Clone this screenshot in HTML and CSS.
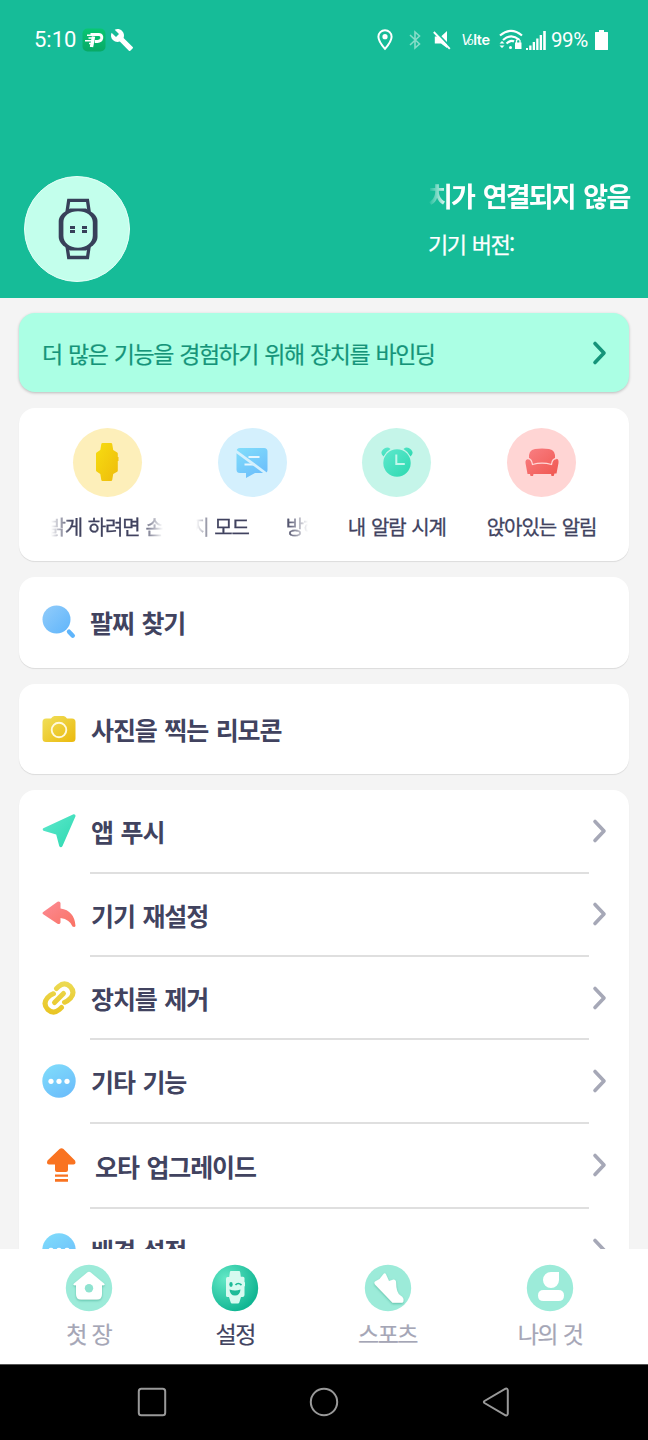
FILE: index.html
```html
<!DOCTYPE html>
<html lang="ko">
<head>
<meta charset="utf-8">
<title>설정</title>
<link rel="stylesheet" href="styles.css">
</head>
<body>
<svg class="defs" width="0" height="0" aria-hidden="true">
  <defs>
    <linearGradient id="yellow" x1="0" y1="0" x2="1" y2="1"><stop offset="0" stop-color="#f0e05c"/><stop offset="1" stop-color="#ebb90c"/></linearGradient>
    <linearGradient id="chain" x1="0" y1="0" x2="0" y2="34" gradientUnits="userSpaceOnUse"><stop offset="0" stop-color="#ecdb55"/><stop offset="1" stop-color="#e9c422"/></linearGradient>
    <linearGradient id="gold" x1="0" y1="0" x2="1" y2="1"><stop offset="0" stop-color="#f7dd12"/><stop offset="1" stop-color="#eebb0b"/></linearGradient>
    <linearGradient id="blue" x1="0" y1="0" x2="1" y2="1"><stop offset="0" stop-color="#92ccfa"/><stop offset="1" stop-color="#5fb5fb"/></linearGradient>
    <linearGradient id="sky" x1="0.2" y1="0" x2="0.8" y2="1"><stop offset="0" stop-color="#7fdbfb"/><stop offset="1" stop-color="#6bbcfb"/></linearGradient>
    <linearGradient id="green" x1="0" y1="0" x2="1" y2="1"><stop offset="0" stop-color="#5fe8cd"/><stop offset="1" stop-color="#2cd9b0"/></linearGradient>
    <linearGradient id="red" x1="0" y1="0" x2="1" y2="1"><stop offset="0" stop-color="#f98084"/><stop offset="1" stop-color="#f0564f"/></linearGradient>
    <linearGradient id="coral" x1="0" y1="0" x2="1" y2="1"><stop offset="0" stop-color="#fc8b95"/><stop offset="1" stop-color="#fa7263"/></linearGradient>
    <linearGradient id="app" x1="0" y1="0" x2="0" y2="1"><stop offset="0" stop-color="#08c673"/><stop offset="1" stop-color="#08a966"/></linearGradient>
    <radialGradient id="active" cx=".3" cy=".3" r=".75"><stop offset="0" stop-color="#63e8c6"/><stop offset="1" stop-color="#10b592"/></radialGradient>
    <filter id="soft" x="-30%" y="-30%" width="160%" height="160%"><feDropShadow dx="0" dy="1.2" stdDeviation="1" flood-color="#3cab91" flood-opacity=".65"/></filter>
  </defs>
</svg>
<div class="phone">
  <header class="top">
    <div class="status">
      <span class="clock">5:10</span>
      <svg class="app-icon" width="24" height="24" viewBox="0 0 24 24"><rect x=".5" y=".5" width="23" height="23" rx="5" fill="url(#app)"/><path d="M8.500 6.500H17q3.300.2 2.700 3.800-.7 3.200-4.200 3.200h-2.700" fill="none" stroke="#fff" stroke-width="3"/><path d="M11.500 8.500L9.500 19" stroke="#fff" stroke-width="3.400"/><path d="M5 7.300h5M6.500 10h4M3 12.700h7M7 15.400h3M8 18h3" stroke="#fff" stroke-width="1.500"/></svg>
      <svg class="wrench" width="24" height="24" viewBox="0 0 24 24"><path d="M22.700 19l-9.100-9.100c.9-2.300.4-5-1.500-6.900-2-2-5-2.400-7.400-1.300L9 6 6 9 1.600 4.700C.4 7.100.9 10.100 2.900 12.100c1.900 1.900 4.600 2.400 6.900 1.500l9.100 9.100c.4.4 1 .4 1.400 0l2.300-2.300c.5-.4.5-1.100.1-1.400z" fill="#fff"/></svg>
      <div class="status-right">
        <svg class="pin" width="16" height="22" viewBox="0 0 16 22"><path d="M8 1.300C4.300 1.300 1.400 4.100 1.400 7.700 1.400 12.300 8 19.800 8 19.800s6.600-7.500 6.600-12.100C14.600 4.100 11.700 1.300 8 1.300z" fill="none" stroke="#fff" stroke-width="2"/><circle cx="8" cy="7.700" r="2.600" fill="#fff"/></svg>
        <svg class="bt" width="12" height="20" viewBox="0 0 12 20"><path d="M1 5l9.500 9L6 18V2l4.500 4L1 15" fill="none" stroke="#87dcc8" stroke-width="1.600"/></svg>
        <svg class="mute" width="18" height="20" viewBox="0 0 18 20"><path d="M14 1v17L8 13.500H1.800v-7H8z" fill="#fff"/><path d="M2.300 1.200L18.300 17.800" stroke="#16bc98" stroke-width="1.800"/><path d="M.8 2L16.800 18.900" stroke="#fff" stroke-width="1.900"/></svg>
        <span class="volte"><i>V</i><i class="o">o</i>lte</span>
        <svg class="wifi" width="24" height="22" viewBox="0 0 24 22"><g fill="none" stroke="#fff" stroke-width="2.200"><path d="M1 6.500Q12-2.800 23 6.500"/><path d="M4 11Q12 3.800 20 10.500"/><path d="M7.500 14.500Q12 10.500 15 12.500"/></g><path d="M16 13.500h6.500v6.500H16z" fill="#fff"/><path d="M17.500 14v-2.500q1.800-2.500 3.500 0V14" fill="none" stroke="#fff" stroke-width="1.300"/><path d="M.5 14.500L3 12l2.500 2.500zM.5 16.500L3 19l2.500-2.500z" fill="#fff"/><circle cx="11.500" cy="18.500" r="1.500" fill="#fff"/></svg>
        <svg class="signal" width="20" height="20" viewBox="0 0 20 20"><path d="M0 18h2v2H0zM3.200 15.500h2.300V20H3.200zM6.700 12H9v8H6.700zM10.200 8.500h2.300V20h-2.300zM13.700 5H16v15h-2.300zM17.200 1h2.600v19h-2.600z" fill="#fff"/></svg>
        <span class="percent">99%</span>
        <svg class="battery" width="13" height="20" viewBox="0 0 13 20"><path d="M4 0h5v2h3.500q.5 0 .5.500v17q0 .5-.5.500H.5q-.5 0-.5-.5v-17Q0 2 .5 2H4z" fill="#fff"/></svg>
      </div>
    </div>
    <div class="device">
      <div class="avatar">
        <svg width="40" height="62" viewBox="0 0 40 62"><g fill="none" stroke="#374059" stroke-width="3.300"><path d="M9 14L10.700 2.400h18.800L31.200 14M9 48l1.700 11.500h18.800L31.200 48"/></g><path d="M12 10.500h16l7 4.500q4.500 4 4.500 8v16q0 4.500-4.500 8.500L28 52.500H12L5 47.500Q.7 43.500.7 39V23q0-4 4.300-8z" fill="#374059"/><path d="M20 13.300c8.500 0 14.800 4.500 14.800 11v13.400c0 6.800-6.300 12-14.800 12S5.400 44.500 5.400 37.700V24.300c0-6.500 6.100-11 14.600-11z" fill="#c3ffec"/><path d="M12 28h5v3h-5zM12 32h5v3h-5zM24 28h5v3h-5zM24 32h5v3h-5z" fill="#374059"/></svg>
      </div>
      <div class="device-text">
        <div class="device-title">치가 연결되지 않음</div>
        <div class="device-version">기기 버전:</div>
      </div>
    </div>
  </header>
  <main class="content">
    <section class="card banner"><span class="banner-text">더 많은 기능을 경험하기 위해 장치를 바인딩</span>
      <svg class="chev dark" width="16" height="26" viewBox="0 0 16 26"><path d="M3 3.500L12 13 3 22.500"/></svg>
    </section>
    <section class="card quick">
      <div class="quick-item">
        <span class="disc disc-yellow"><svg width="24" height="40" viewBox="0 0 24 40"><path d="M7.500 1h8.500q1 0 1.200 1l1 6 4 2.500q.6.500.6 1.300V15h.7v4h-.7v9.500q0 .8-.6 1.300L18.200 32l-1 6q-.2 1-1.200 1H7.500q-1 0-1.200-1l-1-6-3.700-2.500Q1 29 1 28.200V11.800q0-.8.6-1.300L5.300 8l1-6q.2-1 1.200-1z" fill="url(#gold)"/></svg></span>
        <div class="marquee"><span class="run run-wrist">밝게 하려면 손</span></div>
      </div>
      <div class="quick-item">
        <span class="disc disc-blue"><svg width="34" height="34" viewBox="0 0 34 34"><path d="M5 3h24q3.500 0 3.500 3.500V25q0 3-3 3H20l-9 5V28H5q-3.500 0-3.500-3.500v-18Q1.500 3 5 3z" fill="url(#sky)"/><path d="M13.500 12h11M9.500 19.500h10" stroke="#e5f6fe" stroke-width="2"/><path d="M0 5.500L31 28.500" stroke="#d4f0fd" stroke-width="2.800"/></svg></span>
        <div class="marquee"><span class="run run-mode">지 모드</span><span class="run run-next">방해</span></div>
      </div>
      <div class="quick-item">
        <span class="disc disc-green"><svg width="34" height="34" viewBox="0 0 34 34"><g fill="url(#green)"><path d="M3.500 11.500Q-.5 8 3 4.500 7 .8 10.500 4 6 6.500 3.500 11.500zM30.500 11.500Q34.500 8 31 4.500 27 .8 23.500 4q4.500 2.500 7 7.500z"/><circle cx="17" cy="18" r="13.700"/></g><path d="M16.300 9.500v9.500h8.500" fill="none" stroke="#c2f7eb" stroke-width="2"/></svg></span>
        <div class="quick-label">내 알람 시계</div>
      </div>
      <div class="quick-item">
        <span class="disc disc-red"><svg width="36" height="32" viewBox="0 0 36 32"><path d="M5 13Q4 4 11 3q7-1.200 14 0 7 1 6 10 4-1 3.500 4L32.500 27.500H30.500l-.8 2.500H27.500L27 28H9.500L9 30H6.500L6 28H3.500L1.500 17q-.5-4 3.500-4z" fill="url(#red)"/><path d="M3.500 12.500q4-.2 5 6 9.500-2.800 19 0 .6-6 5-6" fill="none" stroke="#ffd8d7" stroke-width="1.300"/></svg></span>
        <div class="quick-label">앉아있는 알림</div>
      </div>
    </section>
    <section class="card single">
      <svg class="icon" width="34" height="34" viewBox="0 0 34 34"><circle cx="14.500" cy="14.500" r="14" fill="url(#blue)"/><path d="M27 26.700l3.800 4" stroke="#5fb5fb" stroke-width="4.400" stroke-linecap="round"/></svg>
      <span class="title find">팔찌 찾기</span>
    </section>
    <section class="card single">
      <svg class="icon" width="34" height="34" viewBox="0 0 34 34"><path d="M4 6.500h5Q10.500 4 12.500 4h9q2 0 3.500 2.500h5q3.500 0 3.500 3.500v16.500q0 3.500-3.500 3.500H4Q.5 30 .5 26.500V10Q.5 6.500 4 6.500z" fill="url(#yellow)"/><circle cx="17" cy="18" r="7.300" fill="none" stroke="#fff9dc" stroke-width="1.900"/></svg>
      <span class="title">사진을 찍는 리모콘</span>
    </section>
    <section class="card list">
      <div class="row">
        <svg class="icon" width="34" height="34" viewBox="0 0 34 34"><path d="M1.300 14.300L31.500.3q2.300-.3 2 2L20.500 32q-1.500 2.600-3.200.2L14.200 20.500 1.500 16.800q-1.500-1.500-.2-2.500z" fill="url(#green)"/></svg>
        <span class="title">앱 푸시</span>
        <svg class="chev" width="16" height="26" viewBox="0 0 16 26"><path d="M3 3.500L12 13 3 22.500"/></svg>
      </div>
      <div class="row">
        <svg class="icon" width="34" height="34" viewBox="0 0 34 34"><path d="M1.200 15L15.500 4.700q2.500-1 3 1.300v5.500q14 2 15 17.500-.8 1.500-3 .5-2.500-7-12-8.500v4.500q-.6 2.300-3 1.300L1.200 17.300q-1.400-1.200 0-2.300z" fill="url(#coral)"/></svg>
        <span class="title">기기 재설정</span>
        <svg class="chev" width="16" height="26" viewBox="0 0 16 26"><path d="M3 3.500L12 13 3 22.500"/></svg>
      </div>
      <div class="row">
        <svg class="icon" width="34" height="34" viewBox="0 0 34 34"><g fill="none" stroke="url(#chain)" stroke-width="5" stroke-linecap="round"><path d="M14.500 7.500l2.300-2.200Q22.500.5 28.200 5.500q5.300 5.800.5 11.500-3.200 3.300-6.200 4.300"/><path d="M19.500 26.500l-2.300 2.200Q11.500 33.500 5.800 28.500.5 22.700 5.300 17 8.500 13.700 11.500 12.700"/><path d="M12.500 21.500l9-9"/></g></svg>
        <span class="title">장치를 제거</span>
        <svg class="chev" width="16" height="26" viewBox="0 0 16 26"><path d="M3 3.500L12 13 3 22.500"/></svg>
      </div>
      <div class="row">
        <svg class="icon" width="34" height="34" viewBox="0 0 34 34"><circle cx="17" cy="17" r="16.700" fill="url(#sky)"/><g fill="#fff"><circle cx="9" cy="17.300" r="2.600"/><circle cx="17" cy="17.300" r="2.600"/><circle cx="25" cy="17.300" r="2.600"/></g></svg>
        <span class="title">기타 기능</span>
        <svg class="chev" width="16" height="26" viewBox="0 0 16 26"><path d="M3 3.500L12 13 3 22.500"/></svg>
      </div>
      <div class="row tall">
        <svg class="icon" width="34" height="34" viewBox="0 0 34 34"><path d="M17.500 1q2-1.600 4 0L33 12.500q1.500 3.800-1.500 4H26V22q0 2-2 2h-9q-2 0-2-2v-5.500H7q-3-.2-1.500-4zM13 26.500h13v2.300H13zM13 31h13v2.700H13z" fill="#f97321"/></svg>
        <span class="title">오타 업그레이드</span>
        <svg class="chev" width="16" height="26" viewBox="0 0 16 26"><path d="M3 3.500L12 13 3 22.500"/></svg>
      </div>
      <div class="row">
        <svg class="icon" width="34" height="34" viewBox="0 0 34 34"><circle cx="17" cy="17" r="16.700" fill="url(#sky)"/><g fill="#fff"><circle cx="9" cy="17.300" r="2.600"/><circle cx="17" cy="17.300" r="2.600"/><circle cx="25" cy="17.300" r="2.600"/></g></svg>
        <span class="title">배경 설정</span>
        <svg class="chev" width="16" height="26" viewBox="0 0 16 26"><path d="M3 3.500L12 13 3 22.500"/></svg>
      </div>
    </section>
  </main>
  <nav class="tabs">
    <div class="tab">
      <svg width="48" height="48" viewBox="0 0 48 48"><circle cx="24" cy="24" r="23.200" fill="#9cebd9"/><g filter="url(#soft)"><path d="M22.500 8.300q1.500-1.300 3 0L39 19.500q1.500 1.500-.5 1.800H37V30q0 5.500-5 5.500H16q-5 0-5-5.500v-8.700H9.500q-2-.3-.5-1.800z" fill="#fff"/></g><circle cx="24" cy="24.200" r="4.200" fill="#8fe3d0"/></svg>
      <span>첫 장</span>
    </div>
    <div class="tab current">
      <svg width="48" height="48" viewBox="0 0 48 48"><circle cx="24" cy="24" r="23.200" fill="url(#active)"/><path d="M20 7h8q1 0 1.200 1.200l.6 4.600H32q1.500 0 1.500 1.500V18l.5.500V22l-.5.500V31q0 2-2 2H30l-1.700 5.500q-.3 1-1.300 1h-6q-1 0-1.300-1L18 33h-1.500Q15 33 15 31.500V15q0-2 1.500-2h1.700l.7-5Q19 7 20 7z" fill="#d7faf0"/><ellipse cx="20" cy="20.500" rx="1.700" ry="2.400" fill="#1dbb98"/><path d="M24.500 21q2.500-3 6 0" fill="none" stroke="#1dbb98" stroke-width="1.700"/><path d="M18.500 25.500q5.500 2 11 0-.5 6-5.500 6t-5.500-6z" fill="#1dbb98"/></svg>
      <span>설정</span>
    </div>
    <div class="tab sport">
      <svg width="48" height="48" viewBox="0 0 48 48"><circle cx="24" cy="24" r="23.200" fill="#9cebd9"/><path filter="url(#soft)" d="M11 17.500L15.500 15l4-5q1-1.200 2.200-.2L25 17l4.500-1.600q2 0 2.500 2 0 11 4.500 14.200 4 2.200 2.800 6.200-.3 1-1.500 1H28.500L11 20.500q-1.500-1.800 0-3z" fill="#fff"/></svg>
      <span>스포츠</span>
    </div>
    <div class="tab">
      <svg width="48" height="48" viewBox="0 0 48 48"><circle cx="24" cy="24" r="23.200" fill="#9cebd9"/><path d="M25 8h8v8a8 8 0 1 1-8-8zM17.500 26h15q5.500 0 5.500 5.500t-5.500 5.500h-15Q12 37 12 31.500t5.500-5.500z" fill="#fff"/></svg>
      <span>나의 것</span>
    </div>
  </nav>
  <div class="system">
    <svg width="30" height="30" viewBox="0 0 30 30"><rect x="1.800" y="1.800" width="26.400" height="26.400" rx="2.500"/></svg>
    <svg width="30" height="30" viewBox="0 0 30 30"><circle cx="15" cy="15" r="13.200"/></svg>
    <svg width="30" height="30" viewBox="0 0 30 30"><path d="M24.500 1.700q2-.7 2.300 1.600v23.400q-.3 2.300-2.300 1.600L3.500 16q-1.300-1 0-2z"/></svg>
  </div>
</div>
</body>
</html>
```
FILE: styles.css
```css
* { box-sizing: border-box; }
body { margin: 0; font-family: "Noto Sans CJK KR", sans-serif; color: #41435f; background: #f4f4f4; }
svg { display: block; flex: none; }
.defs { position: absolute; }
.phone { width: 648px; height: 1440px; display: flex; flex-direction: column; overflow: hidden; }

.top { height: 297.5px; flex: none; background: #16bc98; color: #fff; }
.status { height: 80px; padding: 0 40px 0 34px; display: flex; align-items: center; font: 22px/1 Roboto, sans-serif; }
.clock { width: 48px; }
.wrench { margin-left: 4px; }
.status-right { margin-left: auto; display: flex; align-items: center; }
.pin { margin-right: 1px; }
.bt { margin-left: 15px; }
.mute { margin-left: 12px; }
.volte { margin-left: 10px; width: 31px; font: 600 14.5px/20px Inter, sans-serif; letter-spacing: -.4px; white-space: nowrap; }
.volte i { font-weight: 400; }
.volte .o { font-size: 10px; margin-left: -3px; }
.wifi { margin-left: 7px; }
.signal { margin-left: 3px; }
.percent { margin-left: 5px; width: 38px; font-size: 20.5px; letter-spacing: -.4px; padding-top: 1px; }
.battery { margin-left: 6px; }
.device { display: flex; justify-content: space-between; padding: 95.500px 14px 0 24px; }
.avatar { width: 106px; height: 106px; border-radius: 50%; border: 1.5px solid #e7fff8; background: #c3ffec; display: flex; align-items: center; justify-content: center; }
.avatar svg { margin-left: 1px; }
.device-text { width: 206px; white-space: nowrap; }
.device-title { font-weight: 700; font-size: 27px; line-height: 39px; letter-spacing: -1.800px; word-spacing: 2.800px; -webkit-mask-image: linear-gradient(90deg, transparent, #000 20px); mask-image: linear-gradient(90deg, transparent, #000 20px); }
.device-version { margin-top: 11.500px; font-size: 22px; line-height: 34px; letter-spacing: -1.600px; word-spacing: 2px; -webkit-text-stroke: .25px; }

.content { flex: 1; min-height: 0; overflow: hidden; padding: 15.5px 19px 0; display: flex; flex-direction: column; gap: 16px; }
.card { flex: none; background: #fff; border-radius: 16px; box-shadow: 0 1px 1px rgba(0,0,0,.1); }
.banner { height: 79px; background: #abffe4; display: flex; align-items: center; justify-content: space-between; padding: 0 21px 0 23px; box-shadow: 0 1px 3px rgba(0,0,0,.24); }
.banner-text { color: #159479; font-size: 23px; letter-spacing: -1.500px; word-spacing: 1.500px; padding-top: 1px; white-space: nowrap; -webkit-text-stroke: .2px; }
.chev path { fill: none; stroke: #a6a8b7; stroke-width: 3.600; stroke-linecap: round; stroke-linejoin: round; }
.chev.dark path { stroke: #159479; }
.quick { height: 153px; padding: 20px 15px 0 16px; display: grid; grid-template-columns: repeat(4, 1fr); }
.quick-item { display: flex; flex-direction: column; align-items: center; }
.disc { width: 69px; height: 69px; border-radius: 50%; display: flex; align-items: center; justify-content: center; }
.disc svg { margin-top: -1px; }
.disc-yellow { background: #fdefba; }
.disc-blue { background: #d4f0fd; }
.disc-green { background: #c5f5e9; }
.disc-red { background: #ffd5d4; }
.quick-label, .marquee { margin-top: 15px; font-size: 20px; line-height: 30px; letter-spacing: -1.100px; word-spacing: 1.300px; white-space: nowrap; -webkit-text-stroke: .3px; }
.marquee { width: 112px; display: flex; overflow: hidden; -webkit-mask-image: linear-gradient(90deg, transparent, #000 20px, #000 90px, transparent); mask-image: linear-gradient(90deg, transparent, #000 20px, #000 90px, transparent); }
.run { flex: none; }
.run-wrist { margin-left: -4px; }
.run-mode { margin-left: -5px; }
.run-next { margin-left: 37px; }
.single { height: 90.700px; padding: 0 23px; display: flex; align-items: center; }
.title { font-size: 25px; font-weight: 700; letter-spacing: -1.100px; word-spacing: 1.700px; white-space: nowrap; }
.single .title { margin-left: 15px; padding-bottom: 1px; }
.single .find { margin-left: 14px; }
.list { padding: 0 21.500px 0 23px; }
.row { height: 83.300px; display: grid; grid-template-columns: 48px 499px 1fr; align-items: center; }
.row .icon, .row .chev { margin-bottom: 2px; }
.row .title { height: 100%; padding: 1px 0 0 1px; line-height: 80px; border-bottom: 2px solid #dfdfdf; }
.row .chev { justify-self: end; }
.row.tall { height: 85.800px; }
.tall .title { padding-left: 5px; line-height: 82px; }

.tabs { height: 115px; flex: none; background: #fff; padding: 15px 0 0; display: flex; position: relative; }
.tab { display: flex; flex-direction: column; align-items: center; width: 146.500px; font-size: 23px; line-height: 36px; letter-spacing: -1.500px; word-spacing: .8px; color: #a5a6b6; gap: 2.500px; -webkit-text-stroke: .2px; }
.tab:first-child { margin-left: 15.500px; }
.tab.sport { width: 158px; }
.tab:last-child { width: 167px; }
.current { color: #41435f; }
.system { height: 76px; flex: none; background: #000; border-top: 1px solid #555; padding: 0 137px 2px 136.500px; display: flex; justify-content: space-between; align-items: center; }
.system svg { fill: none; stroke: #999; stroke-width: 2; }
```
